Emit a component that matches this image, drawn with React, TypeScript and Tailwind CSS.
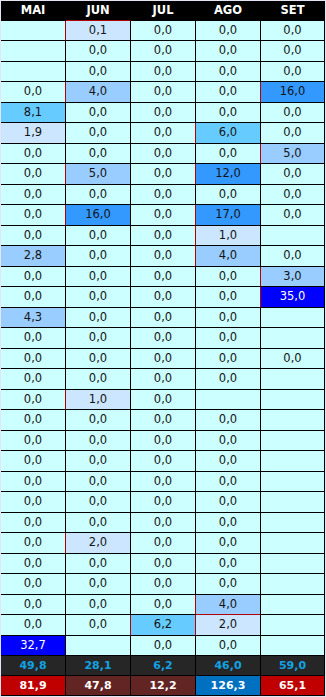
const months = ["MAI", "JUN", "JUL", "AGO", "SET"]

// chuva por dia, "" = sem registro
const rows: string[][] = [
    ["", "0,1", "0,0", "0,0", "0,0"],
    ["", "0,0", "0,0", "0,0", "0,0"],
    ["", "0,0", "0,0", "0,0", "0,0"],
    ["0,0", "4,0", "0,0", "0,0", "16,0"],
    ["8,1", "0,0", "0,0", "0,0", "0,0"],
    ["1,9", "0,0", "0,0", "6,0", "0,0"],
    ["0,0", "0,0", "0,0", "0,0", "5,0"],
    ["0,0", "5,0", "0,0", "12,0", "0,0"],
    ["0,0", "0,0", "0,0", "0,0", "0,0"],
    ["0,0", "16,0", "0,0", "17,0", "0,0"],
    ["0,0", "0,0", "0,0", "1,0", ""],
    ["2,8", "0,0", "0,0", "4,0", "0,0"],
    ["0,0", "0,0", "0,0", "0,0", "3,0"],
    ["0,0", "0,0", "0,0", "0,0", "35,0"],
    ["4,3", "0,0", "0,0", "0,0", ""],
    ["0,0", "0,0", "0,0", "0,0", ""],
    ["0,0", "0,0", "0,0", "0,0", "0,0"],
    ["0,0", "0,0", "0,0", "0,0", ""],
    ["0,0", "1,0", "0,0", "", ""],
    ["0,0", "0,0", "0,0", "0,0", ""],
    ["0,0", "0,0", "0,0", "0,0", ""],
    ["0,0", "0,0", "0,0", "0,0", ""],
    ["0,0", "0,0", "0,0", "0,0", ""],
    ["0,0", "0,0", "0,0", "0,0", ""],
    ["0,0", "0,0", "0,0", "0,0", ""],
    ["0,0", "2,0", "0,0", "0,0", ""],
    ["0,0", "0,0", "0,0", "0,0", ""],
    ["0,0", "0,0", "0,0", "0,0", ""],
    ["0,0", "0,0", "0,0", "4,0", ""],
    ["0,0", "0,0", "6,2", "2,0", ""],
    ["32,7", "", "0,0", "0,0", ""],
]

const totals = ["49,8", "28,1", "6,2", "46,0", "59,0"]
const acum = ["81,9", "47,8", "12,2", "126,3", "65,1"]
const acumBg = ["bg-[#C00000]", "bg-[#632523]", "bg-[#632523]", "bg-[#0070C0]", "bg-[#C00000]"]

function num(v: string) {
    return v === "" ? 0 : parseFloat(v.replace(",", "."))
}

function fill(v: string) {
    const n = num(v)
    if (n === 0) return "bg-[#CCFFFF] text-[#141414]"
    if (n <= 2) return "bg-[#CCE6FF] text-[#141414]"
    if (n <= 5) return "bg-[#99CCFF] text-[#141414]"
    if (n <= 10) return "bg-[#66CCFF] text-[#141414]"
    if (n <= 20) return "bg-[#3399FF] text-[#141414]"
    return "bg-[#0000FF] text-white"
}

export default function App() {

    return (

        <div className="w-[326px] h-[697px] bg-[#E4E4F4] pt-px pl-px" style={{ fontFamily: '"DejaVu Sans", Verdana, sans-serif' }}>

            <div className="w-[324px] h-[695px] grid grid-cols-[65px_65px_65px_65px_64px] grid-rows-[20px_repeat(31,minmax(0,1fr))_20px_20px] text-[11.5px] leading-none">

                {/* cabeçalho */}
                {months.map((m, i) => (
                    <div key={m} className={`flex items-center justify-center bg-black text-white font-bold text-[11.5px] border-r border-black border-b ${i === 1 ? "border-b-[#B00000]" : "border-b-black"}`}>
                        {m}
                    </div>
                ))}

                {/* dias */}
                {rows.map((row, r) =>
                    row.map((v, c) => {
                        const nextColored = c < 4 && num(row[c + 1]) > 0
                        const redBottom = r === 28 && c === 3
                        return (
                            <div
                                key={`${r}-${c}`}
                                className={`flex items-center justify-center border-r border-b ${nextColored ? "border-r-[#B00000]" : "border-r-black"} ${redBottom ? "border-b-[#B00000]" : "border-b-black"} ${fill(v)}`}
                            >
                                {v}
                            </div>
                        )
                    })
                )}

                {/* total */}
                {totals.map((t, i) => (
                    <div key={`t${i}`} className="flex items-center justify-center bg-[#262626] text-[#12A2E4] font-bold text-[11px] border-r border-b border-black">
                        {t}
                    </div>
                ))}

                {/* acumulado */}
                {acum.map((t, i) => (
                    <div key={`a${i}`} className={`flex items-center justify-center text-white font-bold text-[11px] border-r border-b border-black ${acumBg[i]}`}>
                        {t}
                    </div>
                ))}

            </div>

        </div>

    )

}
